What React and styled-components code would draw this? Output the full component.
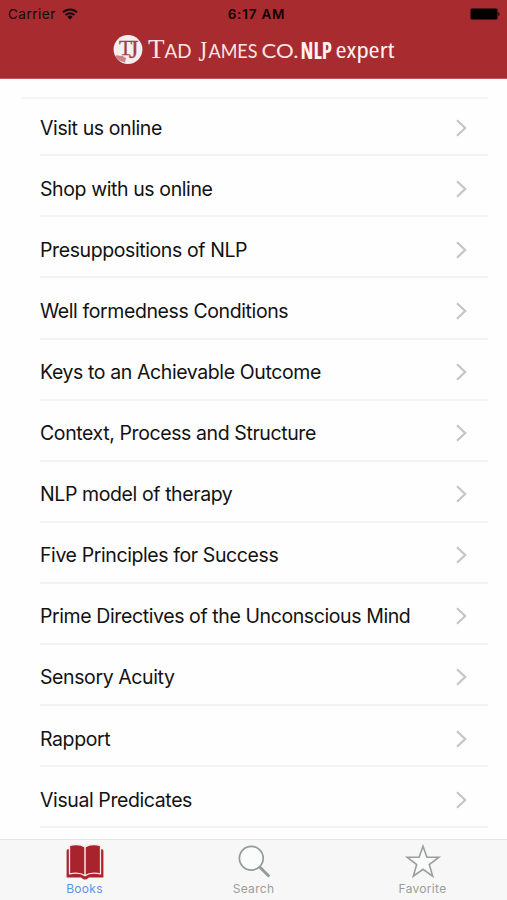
import styled, { createGlobalStyle } from "styled-components";

const GlobalStyle = createGlobalStyle`
  * {
    box-sizing: border-box;
  }

  body {
    margin: 0;
    background-color: #fefefe;
    font-family: Inter, "Liberation Sans", sans-serif;
  }

  ul {
    margin: 0;
    padding: 0;
    list-style: none;
  }
`;

const Screen = styled.div`
  display: flex;
  flex-direction: column;
  width: 507px;
  height: 900px;
  overflow: hidden;
`;

const Header = styled.header`
  display: flex;
  flex-direction: column;
  flex: none;
  height: 79px;
  background-color: #a82b30;
  border-bottom: 1px solid #c0575c;
`;

const StatusBar = styled.div`
  display: grid;
  grid-template-columns: 1fr auto 1fr;
  align-items: center;
  height: 27px;
  margin-bottom: 4px;
  padding: 0 7px 0 8px;
  color: #16090a;
  font-size: 13.5px;
`;

const Carrier = styled.div`
  display: flex;
  align-items: center;
  gap: 6px;
  letter-spacing: 0.5px;
`;

const Time = styled.div`
  padding-left: 5px;
  color: #0c0304;
  font-size: 13.5px;
  font-weight: 600;
  letter-spacing: 0.8px;
`;

const Battery = styled.div`
  display: flex;
  justify-content: flex-end;
`;

const Brand = styled.div`
  display: flex;
  justify-content: center;

  svg {
    display: block;
  }
`;

const Condensed = styled.text`
  font-family: "Open Sans", sans-serif;
  font-stretch: 75%;
  font-size: ${(props) => props.$size}px;
  font-weight: ${(props) => props.$weight};
  fill: #fff4f1;
`;

const Content = styled.main`
  flex: 1;
  min-height: 0;
  padding: 18px 19px 0 21px;
  overflow: hidden;
`;

const List = styled.ul`
  border-top: 2px solid #f3f5f5;
`;

const Row = styled.li`
  display: flex;
  align-items: center;
  justify-content: space-between;
  height: ${(props) => (props.$first ? "57.3px" : "61.08px")};
  margin-left: 19px;
  padding: ${(props) => (props.$first ? "3px" : "6px")} 21px 0 0;
  border-bottom: 2px solid #f3f3f4;
  color: #121212;
  font-size: 19.5px;
  letter-spacing: -0.4px;
  white-space: nowrap;
`;

const TabBar = styled.nav`
  display: grid;
  grid-template-columns: repeat(3, 1fr);
  flex: none;
  height: 61px;
  background-color: #f7f7f7;
  border-top: 1px solid #e3e5e5;
`;

const Tab = styled.div`
  display: flex;
  flex-direction: column;
  align-items: center;
  padding-top: 4px;
  color: ${(props) => (props.$active ? "#5c94ec" : "#9a9d9d")};
  font-size: 12px;
  line-height: 15px;
  letter-spacing: 0.3px;

  svg {
    display: block;
    margin-bottom: 1px;
  }
`;

const items = [
  "Visit us online",
  "Shop with us online",
  "Presuppositions of NLP",
  "Well formedness Conditions",
  "Keys to an Achievable Outcome",
  "Context, Process and Structure",
  "NLP model of therapy",
  "Five Principles for Success",
  "Prime Directives of the Unconscious Mind",
  "Sensory Acuity",
  "Rapport",
  "Visual Predicates",
];

function WifiIcon() {
  return (
    <svg width="16" height="12" viewBox="0 0 16 12" fill="none">
      <path d="M1 4.4a10 10 0 0 1 14 0" stroke="#16090a" strokeWidth="1.9" />
      <path d="M3.6 7a6.3 6.3 0 0 1 8.8 0" stroke="#16090a" strokeWidth="1.9" />
      <path d="M8 11.5 5.4 8.9a3.7 3.7 0 0 1 5.2 0z" fill="#16090a" />
    </svg>
  );
}

function BatteryIcon() {
  return (
    <svg width="30" height="12" viewBox="0 0 30 12">
      <rect x="0.5" y="0.5" width="27" height="11" rx="1.5" fill="#000" />
      <path d="M28.3 4v4c1.6-.6 1.6-3.4 0-4z" fill="#000" />
    </svg>
  );
}

function Logo() {
  return (
    <svg width="287" height="40" viewBox="110 31 287 40" fill="#fbe6e2">
      <circle cx="128" cy="49.5" r="14.4" fill="#f8eef0" />
      <path
        d="M115 56c3-2 4 1 7-.5 2 2 3 1 4 3l-1 4c-5-1-8-3-10-6.5z"
        fill="#bd5c63"
        opacity="0.75"
      />
      <text
        x="119"
        y="54.5"
        fontFamily="'Liberation Serif', serif"
        fontSize="21.5"
        fill="#a83c44"
        stroke="#a83c44"
        strokeWidth="0.3"
      >
        T
        <tspan dx="-3.5" dy="3.5" fontSize="25">
          J
        </tspan>
      </text>
      <g fontFamily="'Liberation Serif', serif">
        <text x="148" y="58" fontSize="27">
          T
        </text>
        <text x="198.5" y="61" fontSize="29" textLength="8.5" lengthAdjust="spacingAndGlyphs">
          J
        </text>
      </g>
      <g fontFamily="Lato, sans-serif" fontSize="19">
        <text x="164.5" y="58" textLength="27" lengthAdjust="spacingAndGlyphs">
          AD
        </text>
        <text x="208.5" y="58" textLength="49" lengthAdjust="spacingAndGlyphs">
          AMES
        </text>
        <text x="261.5" y="58" textLength="37" lengthAdjust="spacingAndGlyphs">
          CO.
        </text>
      </g>
      <Condensed
        x="300.5"
        y="58.5"
        textLength="31.5"
        lengthAdjust="spacingAndGlyphs"
        $size={22.5}
        $weight={700}
      >
        NLP
      </Condensed>
      <Condensed
        x="335.5"
        y="57.5"
        textLength="59"
        lengthAdjust="spacingAndGlyphs"
        $size={21.5}
        $weight={500}
      >
        expert
      </Condensed>
    </svg>
  );
}

function ChevronIcon() {
  return (
    <svg width="11" height="18" viewBox="0 0 11 18" fill="none">
      <path d="M1 1.3 9.2 9 1 16.7" stroke="#c5c5c7" strokeWidth="2.2" />
    </svg>
  );
}

function BooksIcon() {
  return (
    <svg width="38" height="36" viewBox="0 0 38 36" fill="#a8242c">
      <path d="M2.6 5.3h32.8c1.3 0 2 .6 2 1.8v26.500H23.200c-1 0-1.500 2-4.200 2s-3.200-2-4.200-2H.6V7.100c0-1.200.7-1.800 2-1.800z" />
      <path
        d="M3.5 1.5c5.500-1.500 11.500-1.200 15.500 1.500 4-2.700 10-3 15.500-1.500v28.300c-5.500-1.200-11.500-1-15.500 1.800-4-2.800-10-3-15.500-1.800z"
        stroke="#f7e9ea"
        strokeWidth="1.3"
      />
      <path d="M19 3v28.500" stroke="#f7e9ea" strokeWidth="1.5" />
    </svg>
  );
}

function SearchIcon() {
  return (
    <svg width="38" height="36" viewBox="0 0 38 36" fill="none" stroke="#929b9c">
      <circle cx="16.3" cy="14.2" r="11.9" fill="#fafbfb" strokeWidth="1.7" />
      <path d="M24.4 22.8 34.3 32.5" strokeWidth="3" />
    </svg>
  );
}

function FavoriteIcon() {
  return (
    <svg width="38" height="36" viewBox="0 0 38 36" fill="#fafbfb" stroke="#9b9f9f">
      <path
        d="M19 2.2l3.9 11h11.9l-9.5 7.3 3.4 11.7L19 25.3l-9.700 6.900 3.400-11.700L3.200 13.200h11.900z"
        strokeWidth="1.6"
      />
    </svg>
  );
}

function App() {
  return (
    <>
      <GlobalStyle />
      <Screen>
        <Header>
          <StatusBar>
            <Carrier>
              Carrier
              <WifiIcon />
            </Carrier>
            <Time>6:17 AM</Time>
            <Battery>
              <BatteryIcon />
            </Battery>
          </StatusBar>
          <Brand>
            <Logo />
          </Brand>
        </Header>
        <Content>
          <List>
            {items.map((item, index) => (
              <Row key={item} $first={index === 0}>
                {item}
                <ChevronIcon />
              </Row>
            ))}
          </List>
        </Content>
        <TabBar>
          <Tab $active>
            <BooksIcon />
            Books
          </Tab>
          <Tab>
            <SearchIcon />
            Search
          </Tab>
          <Tab>
            <FavoriteIcon />
            Favorite
          </Tab>
        </TabBar>
      </Screen>
    </>
  );
}

export default App;
